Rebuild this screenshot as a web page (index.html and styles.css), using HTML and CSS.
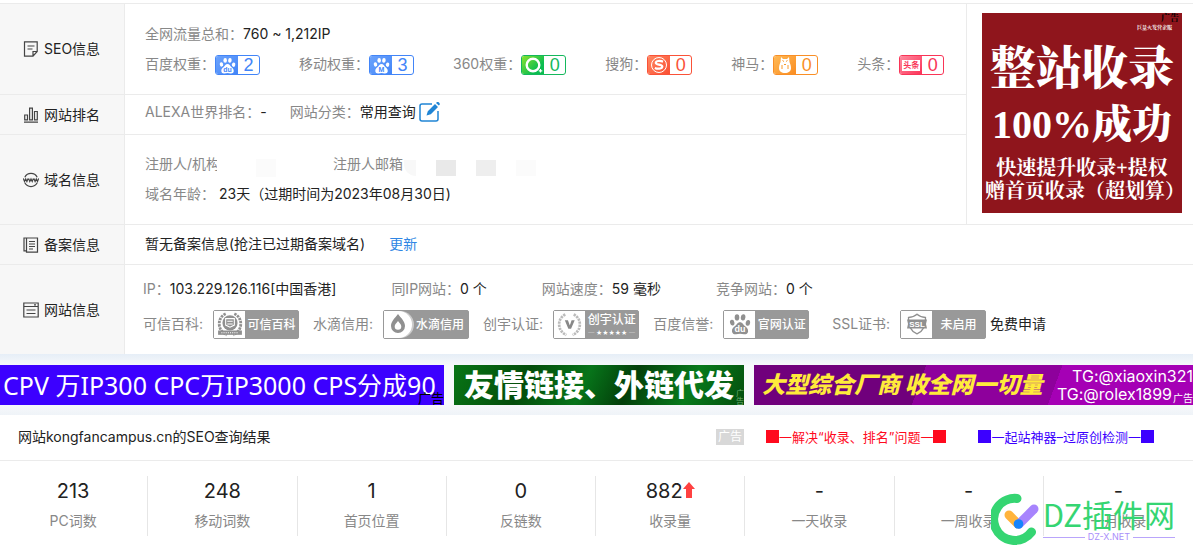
FILE: index.html
```html
<!DOCTYPE html>
<html lang="zh-CN">
<head>
<meta charset="utf-8">
<title>网站SEO查询</title>
<link rel="stylesheet" href="styles.css">
</head>
<body>
<svg class="defs" aria-hidden="true">
  <symbol id="paw" viewBox="0 0 22 22">
    <ellipse cx="3.2" cy="9.6" rx="2.2" ry="2.9" transform="rotate(-12 3.2 9.6)"/>
    <ellipse cx="8" cy="4.4" rx="2.3" ry="3.1"/>
    <ellipse cx="14.1" cy="4.4" rx="2.3" ry="3.1" transform="rotate(8 14.1 4.4)"/>
    <ellipse cx="18.9" cy="9.9" rx="2.2" ry="2.9" transform="rotate(10 18.9 9.9)"/>
    <path d="M11 9.2c-2.6 0-3.2 2.4-4.900 3.900C4.400 14.500 2.700 15.800 3 18.400c.3 2.400 2.200 3 4 2.800 1.500-.1 2.500-.4 4-.4s2.500.3 4 .4c1.800.2 3.900-.4 4.100-2.800.2-2.600-1.600-3.900-3.200-5.300C14.200 11.600 13.600 9.200 11 9.200z"/>
  </symbol>
  <symbol id="wreath" viewBox="0 0 24 24">
    <path d="M8 2.500C3.500 4.500 1.500 9 2.200 13.500 2.800 17.500 5.500 20.500 9 22M16 2.500c4.500 2 6.500 6.500 5.800 11C21.200 17.500 18.500 20.500 15 22" fill="none" stroke="currentColor" stroke-width="2.600" stroke-dasharray="2.200 .8"/>
  </symbol>
</svg>

<main>
<section class="info">
  <h2 class="label">
    <svg width="16" height="16" viewBox="0 0 16 16"><path d="M1.500.8h12.700v9.700l-4.200 4.700H1.500zM10 15v-4.500h4M4.500 5h7M4.500 8h5"/></svg>SEO信息
  </h2>
  <div class="cell seo">
    <p class="line"><span class="key">全网流量总和：</span>760 ~ 1,212IP</p>
    <div class="line weights">
      <div class="pair"><span class="key">百度权重：</span><a href="#" class="weight blue"><span class="mark"><svg width="17" height="17" viewBox="0 0 22 22"><use href="#paw" width="22" height="22"/><text x="11" y="19" class="pawtext">du</text></svg></span><b>2</b></a></div>
      <div class="pair"><span class="key">移动权重：</span><a href="#" class="weight blue"><span class="mark"><svg width="17" height="17" viewBox="0 0 22 22"><use href="#paw" width="22" height="22"/><text x="11" y="19" class="pawtext">M</text></svg></span><b>3</b></a></div>
      <div class="pair"><span class="key">360权重：</span><a href="#" class="weight green"><span class="mark"><svg width="19" height="18" viewBox="0 0 19 18"><circle cx="9" cy="9" r="6.300" fill="none" stroke="#fff" stroke-width="2.400"/><path d="M16.500 13v3.500M14.800 14.800h3.500" stroke="#fff" stroke-width="1.200"/></svg></span><b>0</b></a></div>
      <div class="pair"><span class="key">搜狗：</span><a href="#" class="weight red"><span class="mark"><svg width="18" height="18" viewBox="0 0 18 18"><circle cx="9" cy="9" r="7.500" fill="none" stroke="#fff"/><path d="M13 5.600C10.500 4.700 5.800 4.500 5.800 6.900c0 2 6.500 1.500 6.500 3.700 0 2.600-5 2.500-7.500 1.300" fill="none" stroke="#fff" stroke-width="2.200"/></svg></span><b>0</b></a></div>
      <div class="pair"><span class="key">神马：</span><a href="#" class="weight orange"><span class="mark"><svg width="16" height="18" viewBox="0 0 16 18"><path d="M4 1l2 2h4l2-2 .5 5c.2 1 1.500 3 1.500 6 0 3.500-2.500 5-6 5s-6-1.500-6-5c0-3 1.300-5 1.500-6z"/><path d="M5.500 4.500l1.500 1M10.500 4.500l-1.500 1M5 9v4M11 9v4M7 8l1 1 1-1" stroke="#fa9a2c" fill="none"/></svg></span><b>0</b></a></div>
      <div class="pair"><span class="key">头条：</span><a href="#" class="weight pink"><span class="mark"><i>头条</i></span><b>0</b></a></div>
    </div>
  </div>

  <h2 class="label">
    <svg width="16" height="16" viewBox="0 0 16 16"><path d="M1 15.200h14M1.700 12.800V8h2.800v4.800zM6.600 12.800V1.200h2.800v11.600zM11.500 12.800V4.500h2.800v8.300z"/></svg>网站排名
  </h2>
  <div class="cell rank">
    <p class="line"><span class="key">ALEXA世界排名：</span>-</p>
    <p class="line"><span class="key">网站分类：</span>常用查询<a href="#" class="edit" aria-label="编辑"><svg width="21" height="21" viewBox="0 0 21 21"><path d="M13 2H3Q1 2 1 4v13q0 2 2 2h14q2 0 2-2V9" fill="none" stroke="#2085d5" stroke-width="1.500"/><path d="M7.500 13.500l1.300-4.300L16 2l3 3-7.200 7.200zM17 1l1-1q1-.5 2 .5t.8 2l-1 1z" fill="#2085d5"/></svg></a></p>
  </div>

  <h2 class="label">
    <svg width="16" height="16" viewBox="0 0 16 16"><path d="M1.800 5.200a7 7 0 0 1 12.400 0M1.800 10.800a7 7 0 0 0 12.400 0M.3 6.500l1.200 3 1.200-2.500 1.200 2.500 1.200-3M5.600 6.500l1.200 3L8 7l1.200 2.500 1.200-3M10.900 6.500l1.200 3L13.300 7l1.200 2.500 1.200-3"/></svg>域名信息
  </h2>
  <div class="cell domain">
    <p class="line masked"><span class="key holder">注册人/机构</span><i class="m1"></i><span class="key mail">注册人邮箱</span><i class="m2"></i><i class="m3"></i><i class="m4"></i><i class="m5"></i></p>
    <p class="line"><span class="key age">域名年龄：</span>23天（过期时间为2023年08月30日)</p>
  </div>

  <a href="#" class="poster">
    <small>广告</small>
    <span class="tiny">巨量火发营企服</span>
    <strong>整站收录</strong>
    <strong class="second">100%成功</strong>
    <span>快速提升收录+提权</span>
    <span class="last">赠首页收录（超划算）</span>
  </a>

  <h2 class="label">
    <svg width="16" height="16" viewBox="0 0 16 16"><path d="M3.500 1H14.500v14.200h-11zM3.500 1H1v12.800h2.500M6 4.500h6M6 7h6M6 9.500h6M6 12h4"/></svg>备案信息
  </h2>
  <div class="cell wide record">暂无备案信息(抢注已过期备案域名)<a href="#" class="update">更新</a></div>

  <h2 class="label">
    <svg width="16" height="16" viewBox="0 0 16 16"><path d="M.8 1h14.400v14H.8zM.8 4.500h14.400M3.500 8h9M3.500 11.500h9M11 2.800h2"/></svg>网站信息
  </h2>
  <div class="cell wide site">
    <div class="line facts">
      <p><span class="key">IP：</span>103.229.126.116[中国香港]</p>
      <p><span class="key">同IP网站：</span>0 个</p>
      <p><span class="key">网站速度：</span>59 毫秒</p>
      <p><span class="key">竞争网站：</span>0 个</p>
    </div>
    <div class="line certs">
      <div class="pair"><span class="key">可信百科:</span><a href="#" class="cert"><span class="seal"><svg width="26" height="26" viewBox="0 0 24 24"><use href="#wreath" width="24" height="24"/><circle cx="12" cy="11" r="7"/><path d="M8 7h8v6l-4 2-4-2z" fill="none" stroke="#fff"/><path d="M9.500 9.500h5M9.500 12h5" stroke="#fff"/><path d="M1 18h22v4H1z"/><path d="M4 20h16" stroke="#fff" stroke-dasharray="1 1"/></svg></span><b>可信百科</b></a></div>
      <div class="pair"><span class="key">水滴信用:</span><a href="#" class="cert"><span class="seal round"><svg width="24" height="24" viewBox="0 0 24 24"><path d="M12 2c3 4 7 7.500 7 12a7 7 0 0 1-14 0C5 9.500 9 6 12 2z"/><path d="M12 9c1.500 2 3.300 3.500 3.300 5.500a3.300 3.300 0 0 1-6.600 0C8.700 12.500 10.500 11 12 9z" fill="#fff"/></svg></span><b>水滴信用</b></a></div>
      <div class="pair"><span class="key">创宇认证:</span><a href="#" class="cert"><span class="seal faint"><svg width="25" height="25" viewBox="0 0 24 24"><use href="#wreath" width="24" height="24"/><path d="M7.500 8h3l1.800 5L14 8h3l-3.500 8h-2.600z" fill="#888"/></svg></span><b>创宇认证<small>─ ★★★★★ ─</small></b></a></div>
      <div class="pair"><span class="key">百度信誉:</span><a href="#" class="cert"><span class="seal"><svg width="22" height="22" viewBox="0 0 22 22"><use href="#paw" width="22" height="22"/><text x="11" y="19" class="pawtext light">du</text></svg></span><b>官网认证</b></a></div>
      <div class="pair ssl"><span class="key">SSL证书:</span><a href="#" class="cert"><span class="seal"><svg width="22" height="22" viewBox="0 0 22 22"><path d="M2.500 4.500Q8 4 11 1.200q3 2.800 8.500 3.300c.5 8-1.500 13.500-8.500 16.300C4 18 2 12.500 2.500 4.500z" fill="none" stroke="currentColor" stroke-width="1.300"/><path d="M1 6.500h20l-1 4.500 1 4.500H1L2 11z"/><text x="11" y="13.500" class="ssltext">SSL</text></svg></span><b>未启用</b></a><a href="#" class="apply">免费申请</a></div>
    </div>
  </div>
</section>

<aside class="banners">
  <a href="#" class="banner cpv">CPV 万IP300 CPC万IP3000 CPS分成90<small>广告</small></a>
  <a href="#" class="banner links">友情链接、外链代发<small>广告</small></a>
  <a href="#" class="banner maker"><em>大型综合厂商 收全网一切量</em><span class="contact"><span>TG:@xiaoxin321</span><span class="short">TG:@rolex1899</span></span><small>广告</small></a>
</aside>

<section class="result">
  <header>
    <h1>网站kongfancampus.cn的SEO查询结果</h1>
    <span class="tag">广告</span>
    <a href="#" class="promo hot"><i></i>一解决“收录、排名”问题一<i></i></a>
    <a href="#" class="promo cool"><i></i>一起站神器–过原创检测一<i></i></a>
  </header>
  <dl class="stats">
    <div><dd>213</dd><dt>PC词数</dt></div>
    <div><dd>248</dd><dt>移动词数</dt></div>
    <div><dd>1</dd><dt>首页位置</dt></div>
    <div><dd>0</dd><dt>反链数</dt></div>
    <div><dd>882<svg width="12" height="16" viewBox="0 0 12 16"><path d="M6 0l6 7H9v9H3V7H0z" fill="#ff4141"/></svg></dd><dt>收录量</dt></div>
    <div><dd>-</dd><dt>一天收录</dt></div>
    <div><dd>-</dd><dt>一周收录</dt></div>
    <div><dd>-</dd><dt>一月收录</dt></div>
  </dl>
  <div class="watermark">
    <svg width="48" height="52" viewBox="0 0 48 52"><path d="M26 5.500A21 21 0 1 0 40.500 39" fill="none" stroke="#35d572" stroke-width="9" stroke-linecap="round"/><path d="M18 22l9 9" stroke="#ffb43c" stroke-width="9" stroke-linecap="round"/><path d="M28 31l15-15" stroke="#a784fd" stroke-width="9" stroke-linecap="round"/><circle cx="27.500" cy="31" r="4.800" fill="#1684fc"/></svg>
    <div><strong>DZ插件网</strong><span>DZ-X.NET</span></div>
  </div>
</section>
</main>
</body>
</html>
```

FILE: styles.css
```css
* { box-sizing: border-box; }
body {
  margin: 0;
  background: #fff;
  color: #222;
  font: 14px/30px Inter, "Noto Sans CJK SC", sans-serif;
}
main { overflow: hidden; }
h1, h2, p, dl, dd { margin: 0; font-size: 14px; font-weight: 400; }
a { color: inherit; text-decoration: none; }
i { font-style: normal; }
svg { flex: none; fill: currentColor; }
.defs { position: absolute; width: 0; height: 0; }

.info {
  display: grid;
  grid-template-columns: 125px 1fr 227px;
  margin-top: 3px;
  border-top: 1px solid #ebebeb;
}
.label {
  grid-column: 1;
  display: flex;
  align-items: center;
  gap: 5px;
  padding-left: 23px;
  background: #f7f7f7;
  border-right: 1px solid #ebebeb;
  border-bottom: 1px solid #ebebeb;
}
.label svg { fill: none; stroke: #444; stroke-width: 1.2; }
.cell {
  grid-column: 2;
  padding-left: 20px;
  border-bottom: 1px solid #ebebeb;
  white-space: nowrap;
}
.cell.wide { grid-column: 2 / 4; }
.key { color: #888; }
.line { display: flex; align-items: center; height: 30px; }
.pair { display: flex; align-items: center; }

.seo { padding-top: 15px; padding-bottom: 15px; }
.weights { gap: 39px; }
.weight {
  display: flex;
  width: 45px;
  height: 20px;
  margin-top: 2px;
  border: 1px solid currentColor;
  border-radius: 3px;
  overflow: hidden;
}
.weight .mark {
  display: flex;
  align-items: center;
  justify-content: center;
  width: 22px;
}
.weight svg { fill: #fff; }
.weight b {
  flex: 1;
  font: 18px/19px "Liberation Sans", sans-serif;
  text-align: center;
}
.blue { color: #4285f8; }
.blue .mark { background: linear-gradient(135deg, #6ca3fc, #4285f8); }
.green { color: #14b85c; }
.green .mark { background: linear-gradient(135deg, #8be42c, #0bbd50 70%); }
.red { color: #fa5238; }
.red .mark { background: linear-gradient(135deg, #ff8862, #fa4e32); }
.orange { color: #f98f26; }
.orange .mark { background: linear-gradient(135deg, #ffb955, #fa8d22); }
.pink { color: #f93557; }
.pink .mark { background: linear-gradient(135deg, #ff8b9f, #fb3258); }
.pink i {
  width: 18px;
  background: #fff;
  font-size: 8px;
  font-weight: 700;
  line-height: 11px;
  text-align: center;
}
.pawtext { fill: #4285f8; font: 700 9px "Liberation Sans", sans-serif; text-anchor: middle; }
.pawtext.light { fill: #fff; }
.ssltext { fill: #fff; font: 700 8px "Liberation Sans", sans-serif; text-anchor: middle; }

.rank { display: flex; gap: 23px; padding-top: 2px; padding-bottom: 7px; }
.edit { display: flex; margin-left: 3px; }
.domain { padding-top: 14px; padding-bottom: 15px; }
.holder { width: 72px; overflow: hidden; }
.mail { margin-left: 57px; }
.masked i { width: 20px; height: 16px; margin: 7px 0 0 20px; }
.masked .m1 { height: 18px; margin-left: 39px; background: #fbfbfb; }
.masked .m2 { width: 12px; margin-left: 1px; background: #f8f8f8; border-bottom-left-radius: 12px; }
.masked .m3 { background: #e9e9e9; }
.masked .m4 { background: #eee; }
.masked .m5 { background: #fbfbfb; }
.age { margin-right: 4px; }
.record { padding-top: 4px; padding-bottom: 5px; }
.update { margin-left: 24px; color: #2f86e4; }

.poster {
  position: relative;
  grid-column: 3;
  grid-row: 1 / 4;
  display: flex;
  flex-direction: column;
  align-items: center;
  padding: 9px 11px 11px 15px;
  border-left: 1px solid #ebebeb;
  border-bottom: 1px solid #ebebeb;
  background: #8f151c content-box;
  background-clip: content-box;
  color: #fff;
  font: 700 20px/23px "Liberation Serif", "Noto Serif CJK SC", "Noto Sans CJK SC", serif;
  white-space: nowrap;
}
.poster strong { font-size: 46px; line-height: 58px; }
.poster .second { font-size: 40px; line-height: 54px; margin-bottom: 5px; }
.poster .tiny { align-self: flex-end; margin: 7px 10px 4px 0; font-size: 5px; line-height: 16px; }
.poster .last { padding-left: 6px; }
.poster small { position: absolute; top: 6px; right: 14px; color: #000; font-size: 9px; line-height: 16px; }

.site { padding: 9px 0 10px 18px; border-bottom: 0; }
.info > .label:last-of-type { border-bottom: 0; }
.facts { gap: 55px; }
.certs { gap: 14px; height: 40px; }
.certs .key { margin-right: 10px; }
.certs .ssl { margin-left: 9px; }
.cert {
  display: flex;
  width: 86px;
  height: 29px;
  border: 1px solid #999;
  border-radius: 2px;
  background: #999;
  color: #fff;
}
.cert b {
  flex: 1;
  font-size: 12px;
  font-weight: 500;
  line-height: 27px;
  text-align: center;
}
.cert b small {
  display: block;
  font-size: 6px;
  line-height: 8px;
}
.cert b:has(small) { line-height: 18px; }
.seal {
  display: flex;
  align-items: center;
  justify-content: center;
  width: 31px;
  background: #fff;
  color: #909090;
}
.seal.round { width: 28px; border-radius: 0 14px 14px 0; box-shadow: 2px 0 #ccc; }
.faint { color: #bbb; }
.apply { margin-left: 4px; }

.banners {
  display: grid;
  grid-template-columns: 444fr 290fr 439fr;
  gap: 10px;
  padding: 11px 0 10px;
  background: linear-gradient(#e6eef7, #f7f9fb 12px, #f7f9fb 50px, #eff3f8);
}
.banner {
  position: relative;
  display: flex;
  align-items: center;
  height: 40px;
  overflow: hidden;
  color: #fff;
  white-space: nowrap;
}
.banner small { position: absolute; right: 0; bottom: 0; font-size: 13px; line-height: 13px; }
.cpv { padding-left: 3px; background: #3c00ff; font: 25px/40px "Noto Sans", "Noto Sans CJK SC", sans-serif; }
.cpv small { color: #000; }
.links {
  justify-content: center;
  background: linear-gradient(115deg, #087516, #044d0b 25%, #07741a 45%, #033f0a 60%, #087a1c 80%, #044f0d);
  font-size: 30px;
  font-weight: 900;
}
.banner.links small { width: 8px; color: #6cab70; font-size: 8px; font-weight: 400; line-height: 8px; white-space: normal; }
.maker {
  justify-content: space-between;
  padding-left: 8px;
  background: linear-gradient(110deg, #70007c 38%, #8e009c 38%, #8e009c 68%, #a500b5 68%);
}
.banner.maker small { font-size: 10px; }
.maker em { color: #ffeb3b; font-size: 23px; font-weight: 900; }
.contact { display: flex; flex-direction: column; align-items: flex-end; font: 16px/18px Inter, sans-serif; }
.short { margin-right: 21px; }

.result { position: relative; }
.result header {
  display: flex;
  align-items: center;
  height: 46px;
  padding: 0 39px 2px 18px;
  border-bottom: 1px solid #ebebeb;
}
.tag {
  margin-left: auto;
  padding: 0 2px;
  background: #d8d8d8;
  color: #fff;
  font-size: 12px;
  line-height: 16px;
}
.promo { display: flex; align-items: center; font-size: 13px; }
.promo i { width: 13px; height: 13px; background: currentColor; }
.hot { margin-left: 22px; color: #ff0a1e; }
.cool { margin-left: 32px; color: #3c00ff; }
.stats {
  display: grid;
  grid-template-columns: repeat(8, 1fr);
  margin-left: -1px;
  padding: 15px 0 23px;
  text-align: center;
}
.stats div { display: flex; flex-direction: column; border-right: 1px solid #e6e6e6; }
.stats div:last-child { border-right: 0; }
.stats dd { font-size: 20px; }
.stats dt { color: #888; }
.watermark {
  position: absolute;
  right: 18px;
  bottom: 14px;
  display: flex;
  align-items: center;
  gap: 4px;
}
.stats + .watermark div { display: flex; flex-direction: column; color: #35d572; }
.watermark strong { font: 400 31px/36px "Noto Sans CJK SC", sans-serif; }
.watermark span {
  display: flex;
  align-items: center;
  gap: 3px;
  color: #a98ffa;
  font-size: 9px;
  line-height: 10px;
}
.watermark span::before, .watermark span::after { content: ""; flex: 1; height: 1px; background: #b9a5fb; }
```
